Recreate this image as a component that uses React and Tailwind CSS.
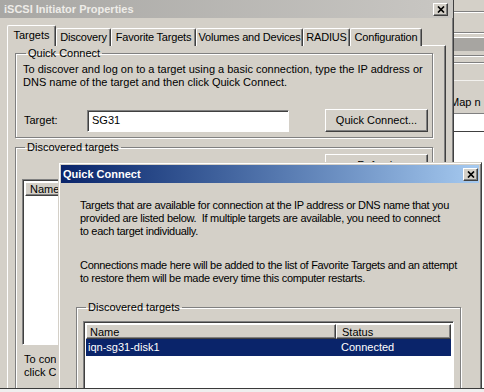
import React from "react";

const raised =
  "bg-[#d4d0c8] border border-t-white border-l-white border-r-[#404040] border-b-[#404040] shadow-[inset_-1px_-1px_0_#808080]";
const sunken =
  "border border-t-[#808080] border-l-[#808080] border-r-white border-b-white shadow-[inset_1px_1px_0_#404040]";
const group =
  "border border-[#808080] shadow-[inset_1px_1px_0_#fff,1px_1px_0_#fff]";

function CloseBtn() {
  return (
    <div className={`${raised} w-[15px] h-[13px] flex items-center justify-center`}>
      <svg width="8" height="7" viewBox="0 0 8 7">
        <path d="M1 0.5 L7 6.5 M7 0.5 L1 6.5" stroke="#000" strokeWidth="1.7" />
      </svg>
    </div>
  );
}

function Tab({ label, w, selected }) {
  if (selected) {
    return (
      <div
        className="h-[21px] -mr-[2px] relative z-10 bg-[#d4d0c8] border border-b-0 border-t-white border-l-white border-r-[#404040] rounded-t-[2px] shadow-[inset_-1px_0_0_#808080] flex items-center justify-center leading-[13px] pb-[2px] whitespace-nowrap"
        style={{ width: w }}
      >
        {label}
      </div>
    );
  }
  return (
    <div
      className="h-[18px] bg-[#d4d0c8] border border-b-0 border-t-white border-l-white border-r-[#404040] rounded-t-[2px] shadow-[inset_-1px_0_0_#808080] flex items-center justify-center leading-[13px] whitespace-nowrap tracking-[-0.2px]"
      style={{ width: w }}
    >
      {label}
    </div>
  );
}

function Legend({ children }) {
  return <legend className="ml-[3px] px-[2px] leading-[13px]">{children}</legend>;
}

export default function App() {
  return (
    <div className="w-[484px] h-[392px] bg-[#efefef] font-['Liberation_Sans',Arial,sans-serif] text-[11px] text-black">
      <div className="relative w-[484px] h-[389px] overflow-hidden border-b border-[#3a3a3a]">
        {/* background window on the right */}
        <div className="absolute left-[453px] top-0 w-[31px] h-[389px] bg-[#d4d0c8] flex flex-col overflow-hidden">
          <div className="h-[11px]" />
          <div className="h-px bg-[#808080]" />
          <div className="h-px bg-white" />
          <div className="h-[19px]" />
          <div className="h-px bg-[#808080]" />
          <div className="h-px bg-white" />
          <div className="h-[3px]" />
          <div className="h-[14px] bg-[#a7a5a1] border-t border-white" />
          <div className="h-[4px]" />
          <div className="h-px bg-[#808080]" />
          <div className="h-px bg-white" />
          <div className="h-[5px]" />
          <div className="h-px bg-[#808080]" />
          <div className="h-px bg-white" />
          <div className="h-[16px]" />
          <div className="h-px bg-[#f2f1ee]" />
          <div className="h-[15px]" />
          <div className="h-[13px] leading-[13px] whitespace-nowrap -ml-[3px] w-[34px] overflow-hidden">Map n</div>
          <div className="h-[4px]" />
          <div className="h-px bg-[#808080]" />
          <div className="h-[17px] bg-white" />
          <div className="h-px bg-[#404040]" />
          <div className="flex-1 bg-white" />
        </div>

        {/* main window */}
        <div className="absolute left-0 top-0 w-[454px] h-[400px] bg-[#d4d0c8] border-r border-[#404040] shadow-[inset_-1px_0_0_#808080]">
          <div className="h-[18px] flex items-center justify-between pl-[4px] pr-[5px] bg-linear-to-r from-[#a8a7a4] to-[#c9c7c3]">
            <span className="font-bold text-[#eeece8] leading-[13px]">iSCSI Initiator Properties</span>
            <CloseBtn />
          </div>

          <div className="pl-[7px] pt-[7px]">
            <div className="flex items-end h-[21px] relative z-10 -mb-px">
              <Tab label="Targets" w={49} selected />
              <div className="flex items-end pl-[2px]">
                <Tab label="Discovery" w={55} />
                <Tab label="Favorite Targets" w={85} />
                <Tab label="Volumes and Devices" w={107} />
                <Tab label="RADIUS" w={47} />
                <Tab label="Configuration" w={72} />
              </div>
            </div>

            <div className="w-[439px] h-[360px] border border-t-white border-l-white border-r-[#404040] border-b-[#404040] shadow-[inset_-1px_-1px_0_#808080] pl-[7px] pt-px">
              <fieldset className={`${group} w-[418px] px-[7px] pb-[5px]`}>
                <Legend>Quick Connect</Legend>
                <div className="leading-[13px] pt-[3px] whitespace-nowrap">
                  To discover and log on to a target using a basic connection, type the IP address or
                  <br />
                  DNS name of the target and then click Quick Connect.
                </div>
                <div className="flex items-center mt-[20px]">
                  <span className="w-[64px] pl-px">Target:</span>
                  <div className={`${sunken} bg-white w-[202px] h-[22px] flex items-center pl-[4px]`}>SG31</div>
                  <div className="flex-1 flex justify-end -mr-[3px]">
                    <div className={`${raised} w-[103px] h-[23px] flex items-center justify-center`}>
                      Quick Connect...
                    </div>
                  </div>
                </div>
              </fieldset>

              <fieldset className={`${group} w-[418px] mt-[3px] px-[6px] h-[260px]`}>
                <Legend>Discovered targets</Legend>
                <div className="flex justify-end -mr-[2px]">
                  <div className={`${raised} w-[103px] h-[23px] flex items-center justify-center`}>Refresh</div>
                </div>
                <div className={`${sunken} bg-white mt-[2px] w-[402px] h-[166px] p-[2px]`}>
                  <div className={`${raised} h-[14px] w-[120px] flex items-center pl-[4px] leading-[12px]`}>Name</div>
                </div>
                <div className="leading-[13px] mt-[8px] pl-[2px] w-[34px] overflow-hidden whitespace-nowrap">
                  To connect
                  <br />
                  click Connect.
                </div>
              </fieldset>
            </div>
          </div>
        </div>

        {/* Quick Connect dialog */}
        <div className="absolute left-[58px] top-[162px] w-[424px] h-[240px] bg-[#d4d0c8] border border-t-[#d4d0c8] border-l-[#d4d0c8] border-r-[#404040] border-b-[#404040] shadow-[inset_1px_1px_0_#fff,inset_-1px_-1px_0_#808080] p-[2px]">
          <div className="h-[18px] flex items-center justify-between pl-[2px] pr-[1px] bg-linear-to-r from-[#0a246a] to-[#a6caf0]">
            <span className="font-bold text-white leading-[13px]">Quick Connect</span>
            <CloseBtn />
          </div>
          <div className="pl-[19px] pt-[16px] leading-[13px] whitespace-nowrap tracking-[-0.3px]">
            <p>
              Targets that are available for connection at the IP address or DNS name that you
              <br />
              provided are listed below.&nbsp; If multiple targets are available, you need to connect
              <br />
              to each target individually.
            </p>
            <p className="mt-[21px]">
              Connections made here will be added to the list of Favorite Targets and an attempt
              <br />
              to restore them will be made every time this computer restarts.
            </p>
          </div>
          <fieldset className={`${group} ml-[15px] mt-[16px] w-[385px] px-[6px] pt-[7px] h-[120px]`}>
            <Legend>Discovered targets</Legend>
            <div className={`${sunken} bg-white w-[371px] h-[100px] p-[2px]`}>
              <div className="flex h-[15px] leading-[12px]">
                <div className={`${raised} w-[250px] flex items-center pl-[3px]`}>Name</div>
                <div className={`${raised} flex-1 flex items-center pl-[5px]`}>Status</div>
              </div>
              <div className="flex h-[17px] items-center bg-[#0a246a] text-white">
                <span className="w-[250px] pl-[2px]">iqn-sg31-disk1</span>
                <span className="pl-[5px]">Connected</span>
              </div>
            </div>
          </fieldset>
        </div>
      </div>
    </div>
  );
}
